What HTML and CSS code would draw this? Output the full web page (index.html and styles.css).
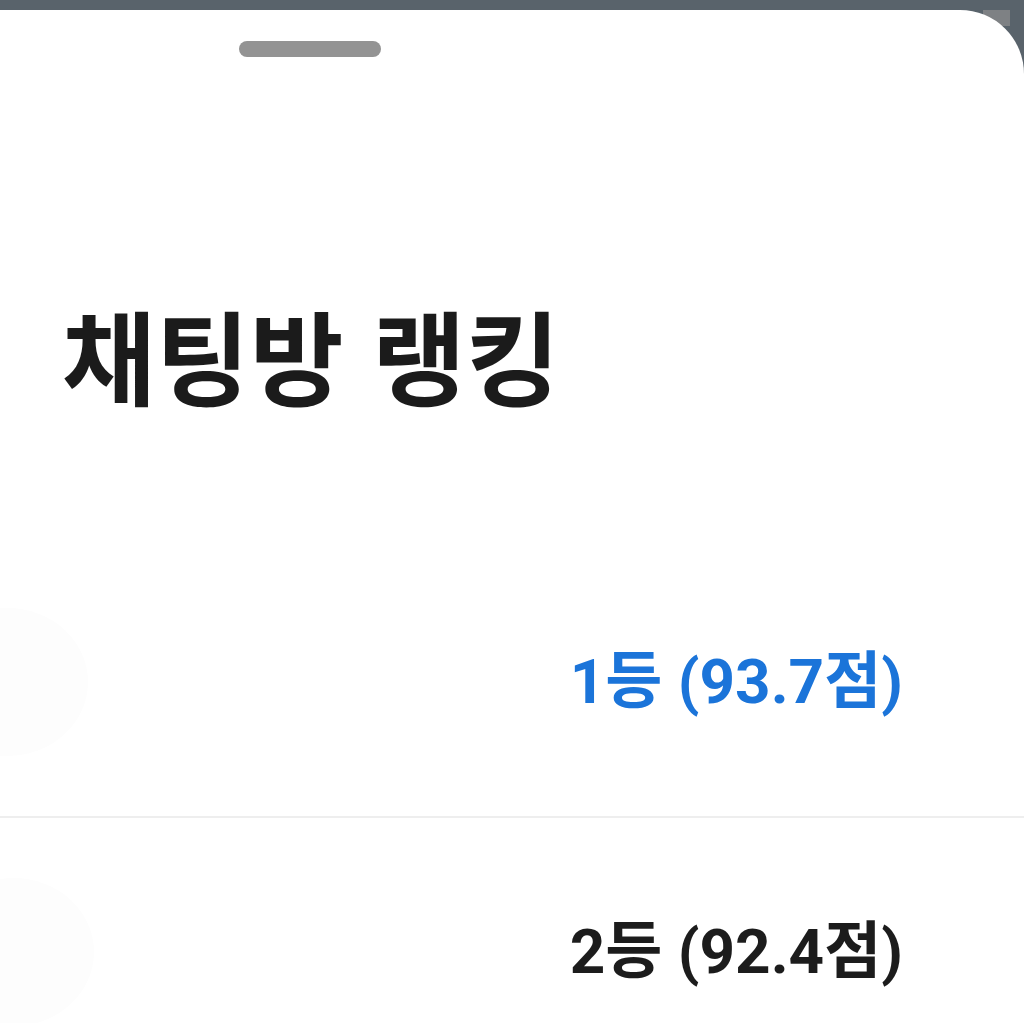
FILE: index.html
```html
<!DOCTYPE html>
<html lang="ko">
<head>
<meta charset="utf-8">
<title>채팅방 랭킹</title>
<link rel="stylesheet" href="styles.css">
</head>
<body>
<div class="corner-patch"></div>
<main class="sheet">
  <div class="handle"></div>
  <h1 class="title">채팅방 랭킹</h1>
  <ul class="ranks">
    <li class="rank-row">
      <span class="avatar"></span>
      <span class="rank rank-first">1등 (93.7점)</span>
    </li>
    <li class="rank-row">
      <span class="avatar avatar-second"></span>
      <span class="rank">2등 (92.4점)</span>
    </li>
  </ul>
</main>
</body>
</html>
```

FILE: styles.css
```css
html, body {
  margin: 0;
  padding: 0;
}
body {
  background: #59636b;
  height: 1023px;
  overflow: hidden;
  position: relative;
}
.corner-patch {
  position: absolute;
  left: 983px;
  top: 10px;
  width: 27px;
  height: 16px;
  background: #7e8184;
}
.sheet {
  position: relative;
  margin-top: 10px;
  background: #ffffff;
  border-top-right-radius: 64px;
  height: 1013px;
  overflow: hidden;
  padding-top: 31px;
  box-sizing: border-box;
}
.handle {
  margin-left: 239px;
  width: 142px;
  height: 16px;
  border-radius: 8px;
  background: #939393;
}
.title {
  margin: 246px 0 0 62px;
  font-family: "Noto Sans CJK KR", "Noto Sans", sans-serif;
  font-weight: 700;
  font-size: 102px;
  line-height: 1;
  color: #1b1b1b;
  letter-spacing: 0;
}
.ranks {
  list-style: none;
  margin: 143px 0 0;
  padding: 0;
}
.rank-row {
  height: 268px;
  display: flex;
  align-items: center;
  justify-content: space-between;
  padding-right: 121px;
  overflow: hidden;
}
.rank-row + .rank-row {
  border-top: 2px solid #eeeeee;
}
.avatar {
  width: 160px;
  height: 148px;
  margin-left: -72px;
  border-radius: 50%;
  background: #fdfdfd;
  flex: none;
}
.avatar-second {
  margin-left: -66px;
}
.rank {
  font-family: Roboto, "Noto Sans CJK KR", sans-serif;
  font-weight: 700;
  font-size: 62px;
  line-height: 1;
  color: #1c1c1c;
}
.rank-first {
  color: #1b74d9;
}
```
